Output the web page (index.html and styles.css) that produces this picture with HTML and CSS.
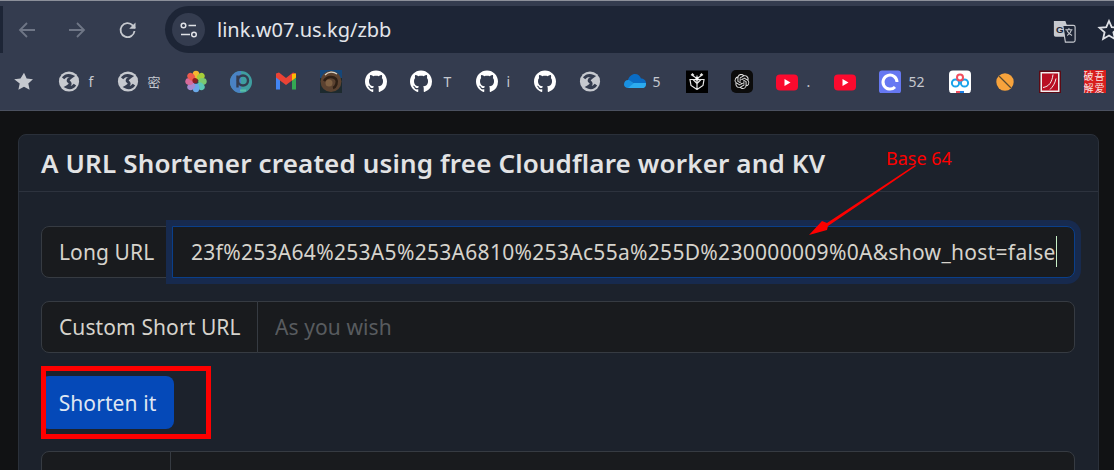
FILE: index.html
```html
<!DOCTYPE html>
<html lang="en">
<head>
<meta charset="utf-8">
<title>URL Shortener</title>
<link rel="stylesheet" href="styles.css">
</head>
<body>
<svg class="defs" width="0" height="0" aria-hidden="true">
  <symbol id="globe" viewBox="0 0 24 24">
    <circle cx="12" cy="12" r="11" fill="#c6c9cf"/>
    <path fill="none" stroke="#343c4f" stroke-width="3.200" d="M5.500 8.500C8 5.500 12 4.800 15.500 6.300 12.500 8.500 9.500 10.500 12 12.500c2.500 2 1 3.500-2.500 5.500 3 1.500 6.500 1 9-2.500"/>
  </symbol>
  <symbol id="gh" viewBox="0 0 16 16">
    <path fill="#fff" fill-rule="evenodd" d="M8 0C3.580 0 0 3.580 0 8c0 3.540 2.290 6.530 5.470 7.590.4.070.55-.17.55-.38 0-.19-.01-.82-.01-1.490-2.010.37-2.530-.49-2.690-.94-.09-.23-.48-.94-.82-1.130-.28-.15-.68-.52-.01-.53.63-.01 1.080.58 1.230.82.720 1.210 1.870.87 2.330.66.070-.52.28-.87.51-1.070-1.780-.2-3.640-.89-3.640-3.950 0-.87.31-1.590.82-2.150-.08-.2-.36-1.020.08-2.120 0 0 .67-.21 2.200.82.64-.18 1.320-.27 2-.27.68 0 1.360.09 2 .27 1.530-1.040 2.200-.82 2.200-.82.44 1.100.16 1.920.08 2.120.51.56.82 1.270.82 2.150 0 3.070-1.870 3.750-3.650 3.950.29.25.54.73.54 1.480 0 1.070-.01 1.930-.01 2.200 0 .21.15.46.55.38A8.013 8.013 0 0016 8c0-4.420-3.580-8-8-8z"/>
  </symbol>
  <symbol id="yt" viewBox="0 0 22 22">
    <rect x="0" y="4" width="22" height="16" rx="4" fill="#fb0a2e"/>
    <path fill="#fff" d="M8.500 8.500v7l6-3.500z"/>
  </symbol>
</svg>

<header class="browser">
  <div class="toolbar">
    <span class="tab-edge"></span>
    <svg class="nav nav-back" width="20" height="20" viewBox="0 0 20 20"><path d="M18 10H3M10 3l-7 7 7 7" fill="none" stroke="#6f7686" stroke-width="1.800"/></svg>
    <svg class="nav nav-fwd" width="20" height="20" viewBox="0 0 20 20"><path d="M2 10h15M10 3l7 7-7 7" fill="none" stroke="#6f7686" stroke-width="1.800"/></svg>
    <svg class="nav nav-reload" width="20" height="20" viewBox="0 0 20 20"><path d="M16.500 11a7 7 0 1 1-1.800-5.600L17 8" fill="none" stroke="#c6c9cf" stroke-width="1.800"/><path d="M17.500 2.500V8.800H11.200z" fill="#c6c9cf"/></svg>
    <div class="omnibox">
      <span class="site-btn">
        <svg width="20" height="16" viewBox="0 0 20 16"><circle cx="4.500" cy="3.500" r="2.300" fill="none" stroke="#dfe1e6" stroke-width="1.500"/><path d="M9.500 3.500H17M2 12.500h9" stroke="#dfe1e6" stroke-width="1.600"/><circle cx="15" cy="12.500" r="2.300" fill="none" stroke="#dfe1e6" stroke-width="1.500"/></svg>
      </span>
      <span class="url">link.w07.us.kg/zbb</span>
      <svg class="translate" width="23" height="23" viewBox="0 0 26 26"><path d="M1 1h13l8 23-8-5H3a2 2 0 0 1-2-2z" fill="#c6c9cf"/><path d="M11 6h12a2 2 0 0 1 2 2v15a2 2 0 0 1-2 2H14z" fill="#1d2536" stroke="#c6c9cf" stroke-width="1.300"/><text x="3.500" y="15" class="g-mark">G</text><path d="M14 11h8M18 9v2M15.500 11c.8 3 3 5 6 6.500M21 11c-.7 3-2.500 5-5 6.500" fill="none" stroke="#c6c9cf" stroke-width="1.200"/></svg>
      <svg class="bookmark-star" width="24" height="24" viewBox="0 0 24 24"><path d="M12 3l2.700 6.200 6.800.6-5.100 4.500 1.500 6.700L12 17.500 6.100 21l1.500-6.700-5.100-4.500 6.800-.6z" fill="none" stroke="#dfe1e6" stroke-width="1.800"/></svg>
    </div>
  </div>
  <nav class="bookmarks">
    <span class="bm"><svg class="ico" viewBox="0 0 24 24"><path d="M12 2.500l2.900 6.300 6.900.8-5.100 4.700 1.400 6.800-6.100-3.400-6.100 3.400 1.400-6.800L1.300 9.600l6.900-.8z" fill="#c6c9cf"/></svg></span>
    <span class="bm"><svg class="ico"><use href="#globe"/></svg><span class="lbl lbl-f">f</span></span>
    <span class="bm"><svg class="ico"><use href="#globe"/></svg><span class="lbl lbl-mi">密</span></span>
    <span class="bm"><svg class="ico" viewBox="0 0 22 22">
      <g>
        <ellipse cx="11" cy="4.500" rx="3.400" ry="4.200" fill="#f7b731"/>
        <ellipse cx="15.800" cy="6.200" rx="3.400" ry="4.200" fill="#a6ce39" transform="rotate(45 15.800 6.200)"/>
        <ellipse cx="17.500" cy="11" rx="4.200" ry="3.400" fill="#7bc96f"/>
        <ellipse cx="15.800" cy="15.800" rx="3.400" ry="4.200" fill="#5bc7b4" transform="rotate(-45 15.800 15.800)"/>
        <ellipse cx="11" cy="17.500" rx="3.400" ry="4.200" fill="#6aa9e9"/>
        <ellipse cx="6.200" cy="15.800" rx="3.400" ry="4.200" fill="#a78bd0" transform="rotate(45 6.200 15.800)"/>
        <ellipse cx="4.500" cy="11" rx="4.200" ry="3.400" fill="#d76a9a"/>
        <ellipse cx="6.200" cy="6.200" rx="3.400" ry="4.200" fill="#ee5a4c" transform="rotate(-45 6.200 6.200)"/>
        <circle cx="10" cy="10" r="2.600" fill="#8c1f1f"/>
      </g></svg></span>
    <span class="bm"><svg class="ico" viewBox="0 0 22 22"><circle cx="11" cy="11.500" r="11" fill="#3f9ea0"/><path d="M11 .5a11 11 0 0 0 0 22z" fill="#4a82c4"/><circle cx="13" cy="10" r="5" fill="none" stroke="#343c4f" stroke-width="2.400"/><path d="M7.500 5v12" stroke="#343c4f" stroke-width="2.400"/><path d="M10 20h6" stroke="#5ac0a8" stroke-width="2"/></svg></span>
    <span class="bm"><svg class="ico" viewBox="0 0 22 22"><path d="M1 5v14h4V9z" fill="#4285f4"/><path d="M17 9v10h4V5z" fill="#34a853"/><path d="M1 3v4l10 7.500L21 7V3l-3-1-7 5.500L4 2z" fill="#ea4335"/><path d="M17 3.500l4-.500v4l-4 3z" fill="#fbbc04"/></svg></span>
    <span class="bm"><svg class="ico" viewBox="0 0 22 23"><rect width="22" height="23" fill="#1d2a2e"/><rect width="22" height="8" fill="#15477a"/><circle cx="11" cy="11.500" r="10.500" fill="#5b4230"/><path d="M5 5a9 9 0 0 1 12-1" fill="none" stroke="#d8d4c8" stroke-width="1.200"/><path d="M4 11c3-5 9-5 12-2 2 3 0 8-3 9" fill="none" stroke="#2d1f15" stroke-width="2.500"/><circle cx="9" cy="13" r="3.500" fill="#7d5f42"/></svg></span>
    <span class="bm"><svg class="ico"><use href="#gh"/></svg></span>
    <span class="bm"><svg class="ico"><use href="#gh"/></svg><span class="lbl lbl-t">T</span></span>
    <span class="bm"><svg class="ico"><use href="#gh"/></svg><span class="lbl lbl-i">i</span></span>
    <span class="bm"><svg class="ico"><use href="#gh"/></svg></span>
    <span class="bm"><svg class="ico"><use href="#globe"/></svg></span>
    <span class="bm"><svg class="ico" viewBox="0 0 22 23"><path d="M4 10C5 6.500 8 4 11 4c3 0 5 2 6 4.500 2.500 0 5 1.500 5 4.500L10 13z" fill="#0a6cc4"/><path d="M0 14.500C0 11.500 2 9.500 5 10l5 3 12 0c0 3-1 5-4 5H4c-2 0-4-1.500-4-3.500z" fill="#1990e0"/><path d="M4 18l6-5 12 0c0 3-1 5-4 5z" fill="#2cabee"/></svg><span class="lbl lbl-5">5</span></span>
    <span class="bm"><svg class="ico" viewBox="0 0 22 22"><rect width="22" height="23" fill="#000"/><path d="M11 5v14M11 8l-6-4M11 8l6-4M11 9L4 9l1 6 6 4M11 9l7 0-1 6-6 4M11 13l-4-4M11 13l4-4M6 3l2 2M16 3l-2 2" fill="none" stroke="#e8e8e8" stroke-width="1.200"/><rect x="9.500" y="7" width="3" height="3" fill="#fff"/></svg></span>
    <span class="bm"><svg class="ico" viewBox="0 0 22 23"><rect width="22" height="23" rx="5" fill="#0c0c0c"/><g transform="translate(3.500 4) scale(.625)"><path fill="#e8e8e8" d="M22.2819 9.8211a5.9847 5.9847 0 0 0-.5157-4.9108 6.0462 6.0462 0 0 0-6.5098-2.9A6.0651 6.0651 0 0 0 4.9807 4.1818a5.9847 5.9847 0 0 0-3.9977 2.9 6.0462 6.0462 0 0 0 .7427 7.0966 5.98 5.98 0 0 0 .511 4.9107 6.051 6.051 0 0 0 6.5146 2.9001A5.9847 5.9847 0 0 0 13.2599 24a6.0557 6.0557 0 0 0 5.7718-4.2058 5.9894 5.9894 0 0 0 3.9977-2.9001 6.0557 6.0557 0 0 0-.7475-7.0729zm-9.022 12.6081a4.4755 4.4755 0 0 1-2.8764-1.0408l.1419-.0804 4.7783-2.7582a.7948.7948 0 0 0 .3927-.6813v-6.7369l2.02 1.1686a.071.071 0 0 1 .038.052v5.5826a4.504 4.504 0 0 1-4.4945 4.4944zm-9.6607-4.1254a4.4708 4.4708 0 0 1-.5346-3.0137l.142.0852 4.783 2.7582a.7712.7712 0 0 0 .7806 0l5.8428-3.3685v2.3324a.0804.0804 0 0 1-.0332.0615L9.74 19.9502a4.4992 4.4992 0 0 1-6.1408-1.6464zM2.3408 7.8956a4.485 4.485 0 0 1 2.3655-1.9728V11.6a.7664.7664 0 0 0 .3879.6765l5.8144 3.3543-2.0201 1.1685a.0757.0757 0 0 1-.071 0l-4.8303-2.7865A4.504 4.504 0 0 1 2.3408 7.872zm16.5963 3.8558L13.1038 8.364 15.1192 7.2a.0757.0757 0 0 1 .071 0l4.8303 2.7913a4.4944 4.4944 0 0 1-.6765 8.1042v-5.6772a.79.79 0 0 0-.407-.667zm2.0107-3.0231l-.142-.0852-4.7735-2.7818a.7759.7759 0 0 0-.7854 0L9.409 9.2297V6.8974a.0662.0662 0 0 1 .0284-.0615l4.8303-2.7866a4.4992 4.4992 0 0 1 6.6802 4.66zM8.3065 12.863l-2.02-1.1638a.0804.0804 0 0 1-.038-.0567V6.0742a4.4992 4.4992 0 0 1 7.3757-3.4537l-.142.0805L8.704 5.459a.7948.7948 0 0 0-.3927.6813zm1.0976-2.3654l2.602-1.4998 2.6069 1.4998v2.9994l-2.5974 1.4997-2.6067-1.4997Z"/></g></svg></span>
    <span class="bm"><svg class="ico"><use href="#yt"/></svg><span class="lbl lbl-dot">.</span></span>
    <span class="bm"><svg class="ico"><use href="#yt"/></svg></span>
    <span class="bm"><svg class="ico" viewBox="0 0 22 22"><rect width="22" height="23" rx="3" fill="#6678f2"/><path d="M16 16.500a7 7 0 1 1 2-5" fill="none" stroke="#fff" stroke-width="3"/></svg><span class="lbl lbl-52">52</span></span>
    <span class="bm"><svg class="ico" viewBox="0 0 22 22"><rect width="22" height="23" rx="4" fill="#fff"/><g fill="none" stroke-width="2"><circle cx="6.500" cy="12.500" r="3.600" stroke="#1aa3ea"/><circle cx="15.500" cy="12.500" r="3.600" stroke="#1aa3ea"/><circle cx="11" cy="7" r="3" stroke="#f04d5e"/></g><rect x="7" y="20.500" width="4" height="2" fill="#f04d5e"/><rect x="11" y="20.500" width="4" height="2" fill="#1a7fe6"/></svg></span>
    <span class="bm"><svg class="ico" viewBox="0 0 22 22"><circle cx="11" cy="11.500" r="8.700" fill="#f7a33c"/><path d="M5 5.500l12 12" stroke="#5a4a30" stroke-width="1.200"/></svg></span>
    <span class="bm"><svg class="ico" viewBox="0 0 22 22"><rect width="22" height="23" rx="1" fill="#5c0a14"/><rect x="1.500" y="1.500" width="19" height="20" fill="#f0eeee"/><rect x="3" y="3" width="16" height="17" fill="#b90f23"/><path d="M4 17c6-1 9-5 10-13M11 19c3-3 5-6 6-11" fill="none" stroke="#f0eeee" stroke-width="1"/></svg></span>
    <span class="bm"><span class="seal">破吾<br>解爱</span></span>
  </nav>
</header>

<main class="page">
  <section class="card">
    <h1 class="card-title">A URL Shortener created using free Cloudflare worker and KV</h1>
    <div class="card-body">
      <div class="group">
        <span class="addon addon-long">Long URL</span>
        <div class="field-wrap">
          <input class="field field-focus" type="text" readonly value="23f%253A64%253A5%253A6810%253Ac55a%255D%230000009%0A&amp;show_host=false">
          <span class="caret"></span>
        </div>
      </div>
      <div class="group">
        <span class="addon addon-custom">Custom Short URL</span>
        <input class="field" type="text" placeholder="As you wish">
      </div>
      <div class="btn-row">
        <button class="btn" type="button">Shorten it</button>
        <span class="mark-box"></span>
      </div>
      <!-- The reference crops this row at the frame edge: only letter tips show, so both strings below are guesses, not readings. -->
      <div class="group group-cropped">
        <span class="addon addon-short">Password</span>
        <input class="field" type="text" readonly value="Able">
      </div>
    </div>
  </section>
  <div class="note">
    <span class="note-text">Base 64</span>
    <svg class="note-arrow" width="120" height="80" viewBox="0 0 120 80"><path d="M107 0L19 58l-5-2L1 70l18-5 1-4L108 1z" fill="#fe0000"/></svg>
  </div>
</main>
</body>
</html>
```
FILE: styles.css
```css
* { box-sizing: border-box; }
html, body { margin: 0; height: 470px; overflow: hidden; }
body {
  background: #111214;
  color: #dee2e6;
  font-family: "Noto Sans", "Open Sans", "Noto Sans CJK SC", sans-serif;
  width: 1114px;
}
.defs { position: absolute; }

.browser {
  height: 111px;
  background: #343c4f;
  border-top: 1px solid #8c909a;
  border-bottom: 1px solid #4b5160;
}
.toolbar {
  height: 60px;
  display: flex;
  align-items: flex-start;
  padding-top: 5px;
}
.tab-edge {
  width: 3px;
  height: 47px;
  background: #1d2536;
}
.nav { margin-top: 14px; flex: none; }
.nav-back { margin-left: 14px; }
.nav-fwd { margin-left: 30px; }
.nav-reload { margin-left: 31px; }
.omnibox {
  flex: 1;
  margin-left: 27px;
  height: 47px;
  background: #1d2536;
  border-radius: 24px 0 0 24px;
  display: flex;
  align-items: center;
  padding-left: 7px;
}
.site-btn {
  width: 33px;
  height: 33px;
  border-radius: 50%;
  background: #343c4f;
  display: flex;
  align-items: center;
  justify-content: center;
  flex: none;
}
.url {
  margin-left: 12px;
  font-size: 20px;
  color: #e3e5ea;
  flex: 1;
}
.translate { flex: none; margin-right: 21px; margin-top: 3px; }
.bookmark-star { flex: none; margin-right: -7px; }
.g-mark { font: 700 11px "Liberation Sans", sans-serif; fill: #1d2536; }

.bookmarks {
  height: 45px;
  display: flex;
  align-items: center;
  padding-bottom: 4px;
  padding-left: 1px;
}
.bm {
  display: flex;
  align-items: center;
  padding: 0 11.5px;
  flex: none;
}
.ico { width: 22px; height: 23px; flex: none; display: block; }
.lbl {
  font-size: 14px;
  color: #c6c9cf;
  text-align: left;
  white-space: nowrap;
}
.lbl-f { width: 14px; padding-left: 9px; }
.lbl-mi { width: 23px; padding-left: 9px; font-size: 13px; font-family: "Noto Sans CJK SC", sans-serif; }
.lbl-t { width: 21px; padding-left: 12px; }
.lbl-i { width: 13px; padding-left: 9px; }
.lbl-5 { width: 17px; padding-left: 7px; }
.lbl-dot { width: 13px; padding-left: 9px; }
.lbl-52 { width: 25px; padding-left: 8px; }
.seal {
  width: 22px;
  height: 23px;
  background: #d81e1e;
  font: 10px/11.5px "Noto Sans CJK TC", sans-serif;
  letter-spacing: 1px;
  color: #f6e6e6;
  text-align: center;
  white-space: nowrap;
}

.page { padding: 23px 15px 0 18px; position: relative; }
.card {
  background: #1c222c;
  border: 1px solid #2a303a;
  border-radius: 8px;
  height: 360px;
  overflow: hidden;
}
.card-title {
  margin: 0;
  height: 57px;
  padding-left: 22px;
  font-size: 26px;
  line-height: 57px;
  font-weight: 600;
  letter-spacing: 0.15px;
  color: #e2e3e4;
  border-bottom: 1px solid #2d333e;
  white-space: nowrap;
}
.card-body {
  padding: 34px 23px 0 22px;
  display: flex;
  flex-direction: column;
  gap: 23px;
}
.group {
  display: flex;
  height: 52px;
  flex: none;
}
.addon {
  display: flex;
  align-items: center;
  padding: 0 17px;
  background: #191b1e;
  border: 1px solid #363b42;
  border-radius: 8px 0 0 8px;
  font-size: 21px;
  letter-spacing: 0.1px;
  color: #d6d3cc;
  white-space: nowrap;
}
.addon-long { width: 132px; }
.addon-custom { width: 217px; }
.addon-short { width: 130px; }
.field-wrap { flex: 1; display: flex; position: relative; }
.field {
  flex: 1;
  min-width: 0;
  height: 52px;
  padding: 0 17px;
  margin-left: -1px;
  background: #191b1e;
  border: 1px solid #363b42;
  border-radius: 0 8px 8px 0;
  font: inherit;
  font-size: 21px;
  letter-spacing: 0.1px;
  color: #d6d3cc;
  outline: none;
}
.field::placeholder { color: #585b5f; opacity: 1; }
.field-focus {
  position: relative;
  border-color: #0a3f8a;
  box-shadow: 0 0 0 6px #172a4e;
  letter-spacing: 0.3px;
  padding: 0 0 0 18px;
}
.caret {
  position: absolute;
  right: 18px;
  top: 10px;
  width: 1px;
  height: 31px;
  background: #c8f0c8;
}
.group-cropped .addon,
.group-cropped .field { padding-top: 7px; }

.btn-row { display: flex; position: relative; flex: none; height: 52px; }
.btn {
  width: 133px;
  height: 53px;
  flex: none;
  background: #0549b8;
  color: #dfe6f2;
  border: none;
  border-radius: 8px;
  font: inherit;
  font-size: 21px;
  letter-spacing: 0.1px;
  padding: 0;
}
.mark-box {
  position: absolute;
  left: 0;
  top: -10px;
  width: 170px;
  height: 73px;
  border: 5px solid #fe0000;
}

.note { position: absolute; left: 0; top: 0; }
.note-text {
  position: absolute;
  left: 886px;
  top: 37px;
  font-size: 18px;
  line-height: 20px;
  color: #fe0000;
  white-space: nowrap;
}
.note-arrow { position: absolute; left: 808px; top: 54px; }
```
